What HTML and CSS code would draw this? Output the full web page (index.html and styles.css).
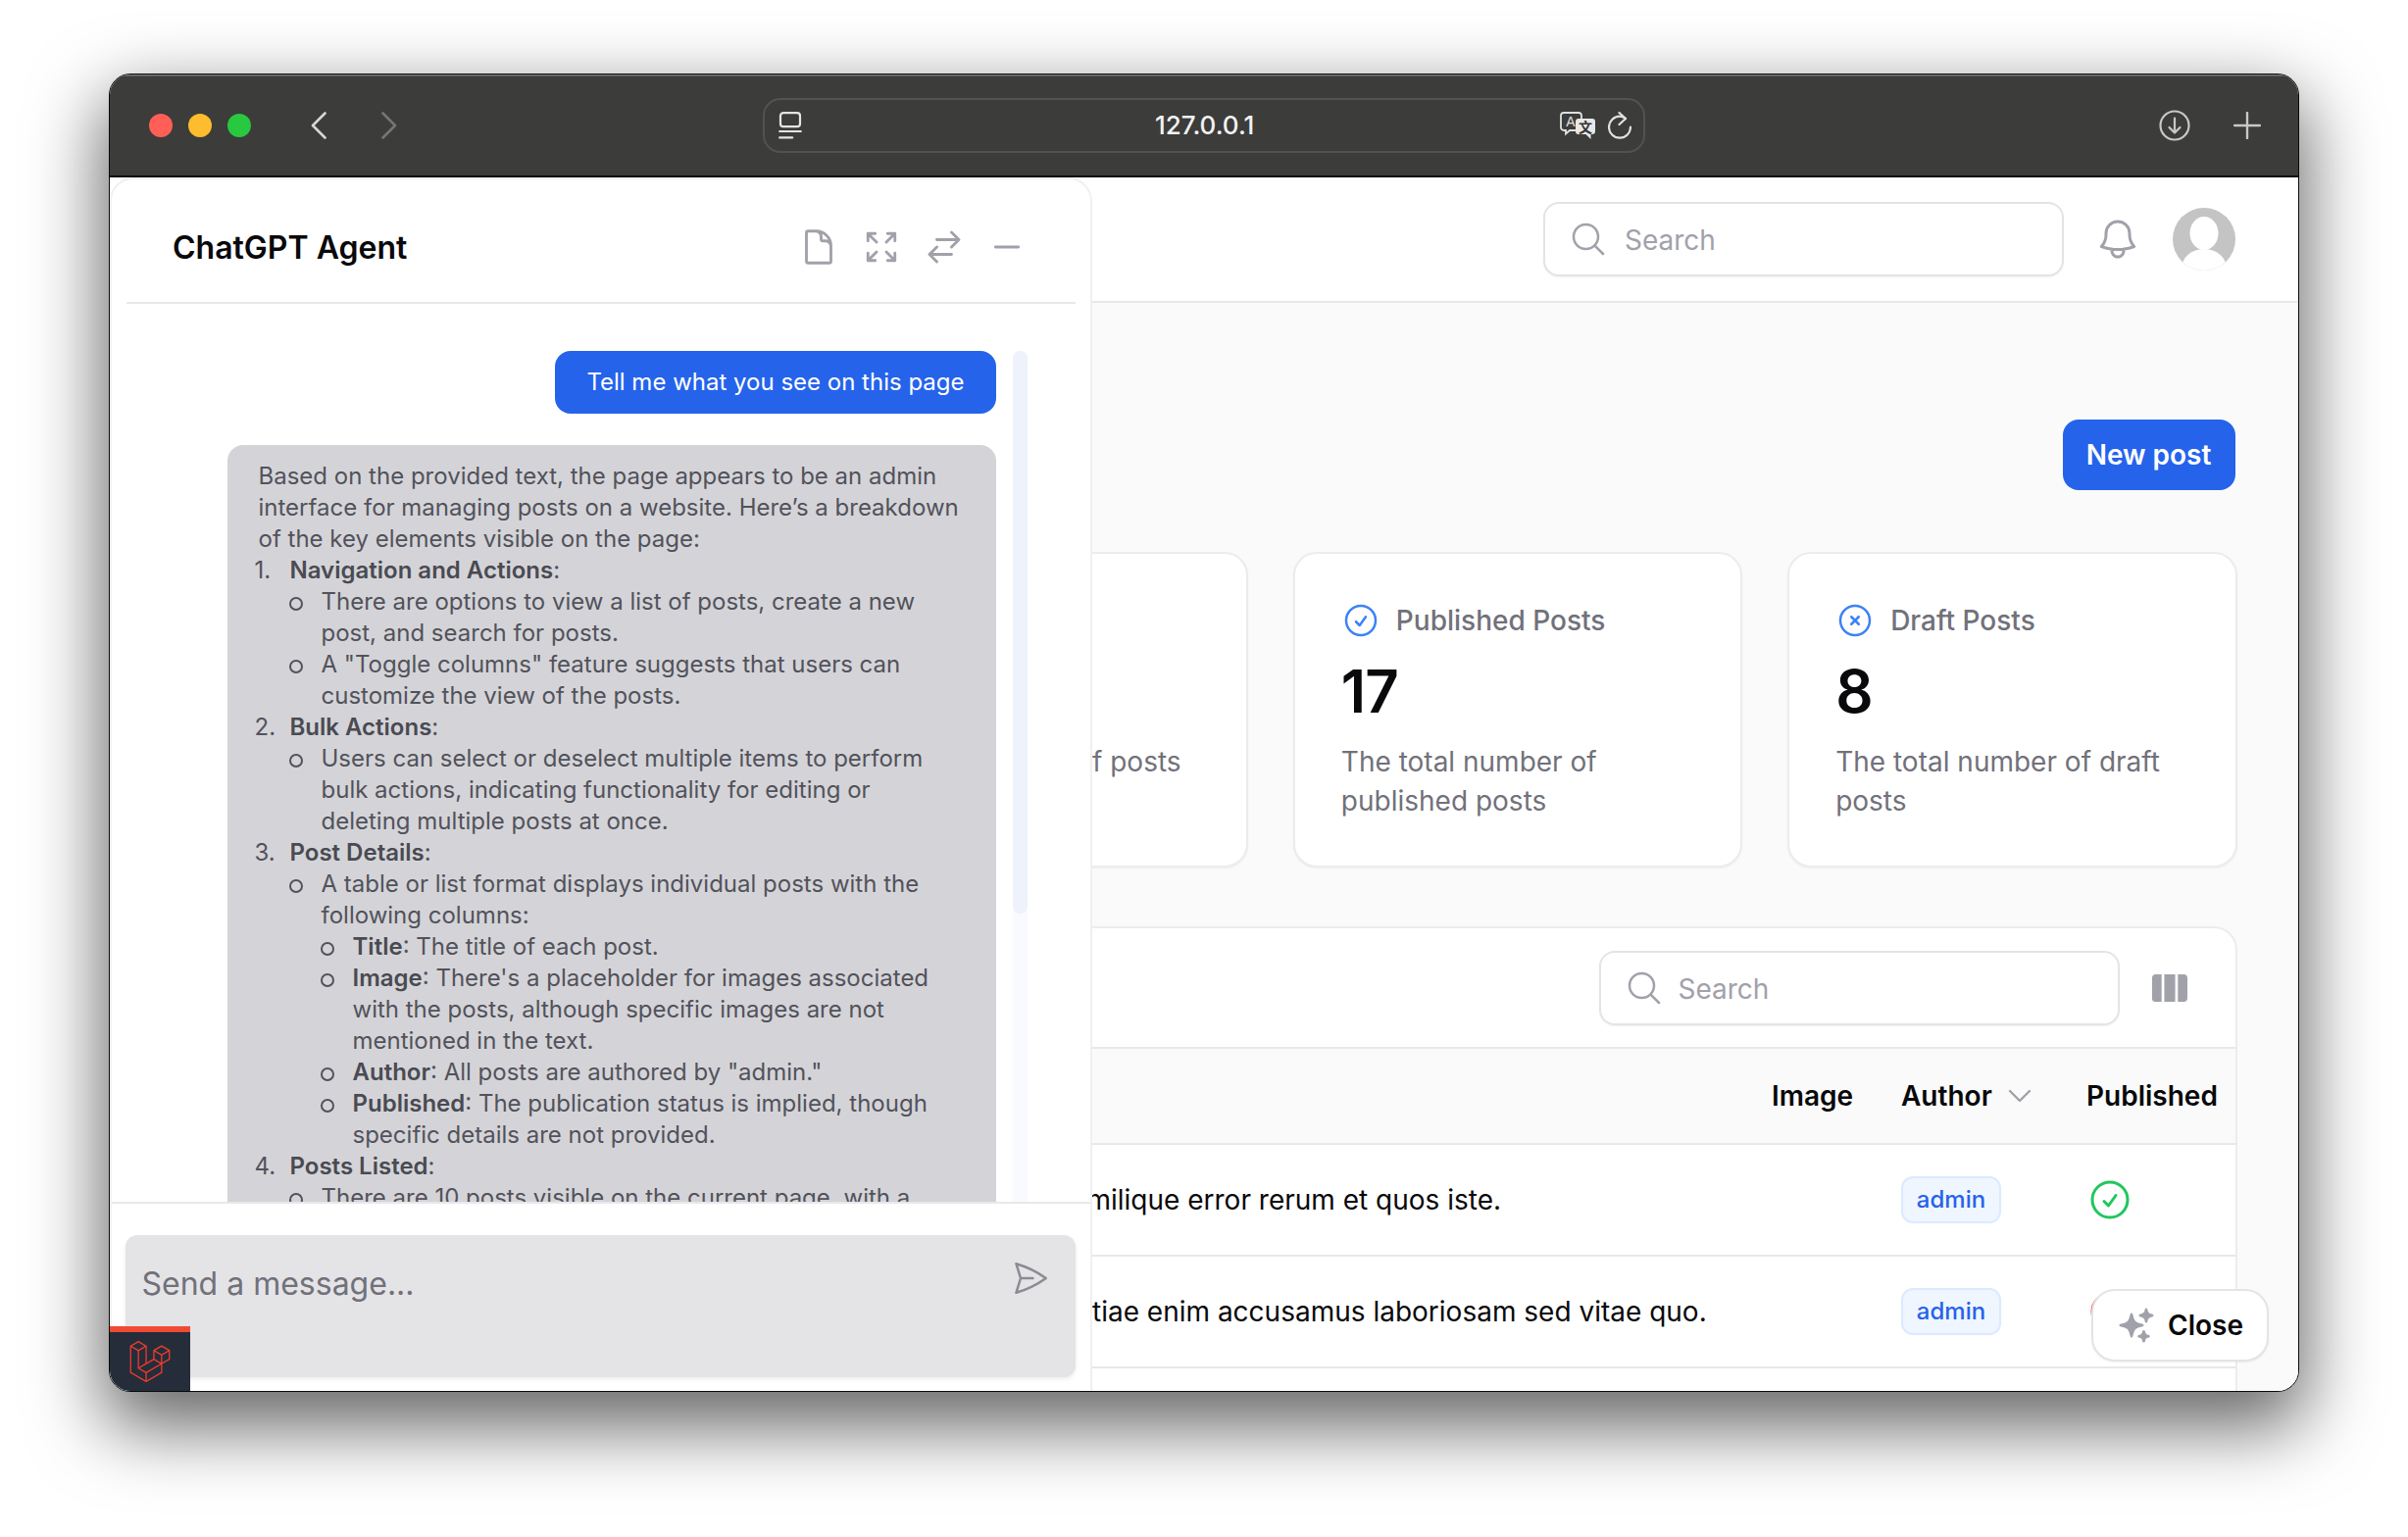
FILE: index.html

```html
<!DOCTYPE html>
<html lang="en">
<head>
    <meta charset="UTF-8">
    <meta name="viewport" content="width=device-width, initial-scale=1.0">
    <title>Posts</title>
    <link rel="stylesheet" href="styles.css">
</head>
<body>
    <div class="window">
        <!-- Browser toolbar -->
        <div class="titlebar">
            <div class="lights">
                <span class="light red"></span>
                <span class="light yellow"></span>
                <span class="light green"></span>
            </div>
            <svg class="nav-back" viewBox="0 0 16 28" fill="none" stroke="#d6d6d6" stroke-width="2.6" stroke-linecap="round" stroke-linejoin="round"><path d="M14.5 1.5 2 14l12.5 12.5"/></svg>
            <svg class="nav-forward" viewBox="0 0 16 28" fill="none" stroke="#757575" stroke-width="2.6" stroke-linecap="round" stroke-linejoin="round"><path d="M1.5 1.5 14 14 1.5 26.5"/></svg>
            <div class="address">
                <svg class="address-left" viewBox="0 0 24 28" fill="none" stroke="#e4e4e4" stroke-width="2.2" stroke-linecap="round"><rect x="2" y="1.2" width="20" height="14" rx="3"/><path d="M1.2 20h21.6"/><path d="M1.2 26.4h13"/></svg>
                <span class="url">127.0.0.1</span>
                <div class="address-right">
                    <svg class="translate" viewBox="0 0 36 28"><path d="M4 1h15a3 3 0 0 1 3 3v12a3 3 0 0 1-3 3h-9l-4 3.500V19H4a3 3 0 0 1-3-3V4a3 3 0 0 1 3-3z" fill="#3c3c3a" stroke="#e0e0e0" stroke-width="1.800"/><text x="11" y="14.500" class="translate-a">A</text><path d="M19 7h14a3 3 0 0 1 3 3v10a3 3 0 0 1-3 3h-1.500v5l-5-5H19a3 3 0 0 1-3-3V10a3 3 0 0 1 3-3z" fill="#e8e8e8"/><text x="26" y="20.500" class="translate-b">文</text></svg>
                    <svg class="reload" viewBox="0 0 24 28" fill="none" stroke="#e0e0e0" stroke-width="2.200" stroke-linecap="round" stroke-linejoin="round"><path d="M18 7c-2-1.500-4-2.300-6-2.300a11 11 0 1 0 11 11"/><path d="m11.500 1 6.500 6-6.500 6"/></svg>
                </div>
            </div>
            <svg class="download" viewBox="0 0 32 32" fill="none" stroke="#c8c8c8" stroke-width="2.200" stroke-linecap="round" stroke-linejoin="round"><circle cx="16" cy="16" r="14.500"/><path d="M16 8.500v15M10.500 18l5.500 5.500 5.500-5.500"/></svg>
            <svg class="plus" viewBox="0 0 28 28" fill="none" stroke="#c8c8c8" stroke-width="2.400" stroke-linecap="round"><path d="M14 1v26M1 14h26"/></svg>
        </div>

        <div class="app">
            <!-- Topbar -->
            <div class="topbar">
                <div class="search">
                    <svg class="search-icon" viewBox="0 0 24 24" fill="none" stroke="#a1a1aa" stroke-width="1.5" stroke-linecap="round" stroke-linejoin="round"><path d="M21 21l-5.197-5.197m0 0A7.5 7.5 0 105.196 5.196a7.5 7.5 0 0010.607 10.607z"/></svg>
                    <span>Search</span>
                </div>
                <svg class="bell" viewBox="0 0 24 24" fill="none" stroke="#a1a1aa" stroke-width="1.5" stroke-linecap="round" stroke-linejoin="round"><path d="M14.857 17.082a23.848 23.848 0 005.454-1.31A8.967 8.967 0 0118 9.750v-.7V9A6 6 0 006 9v.75a8.967 8.967 0 01-2.312 6.022c1.733.64 3.56 1.085 5.455 1.31m5.714 0a24.255 24.255 0 01-5.714 0m5.714 0a3 3 0 11-5.714 0"/></svg>
                <svg class="avatar" viewBox="0 0 64 64"><defs><clipPath id="avatarClip"><circle cx="32" cy="32" r="32"/></clipPath></defs><circle cx="32" cy="32" r="32" fill="#c4c4c4"/><g clip-path="url(#avatarClip)" fill="#fff"><ellipse cx="32" cy="26" rx="14.500" ry="17"/><ellipse cx="32" cy="62" rx="23" ry="20"/></g></svg>
            </div>

            <div class="content">
                <div class="page-actions">
                    <button class="primary-btn">New post</button>
                </div>

                <div class="stats">
                    <div class="stat-card">
                        <div class="stat-label">
                            <svg class="stat-icon" viewBox="0 0 24 24" fill="none" stroke="#3b82f6" stroke-width="1.5" stroke-linecap="round" stroke-linejoin="round"><path d="M21 12a9 9 0 11-18 0 9 9 0 0118 0z"/></svg>
                            <span>All Posts</span>
                        </div>
                        <div class="stat-number">25</div>
                        <p class="stat-desc">The total number of posts</p>
                    </div>
                    <div class="stat-card">
                        <div class="stat-label">
                            <svg class="stat-icon" viewBox="0 0 24 24" fill="none" stroke="#3b82f6" stroke-width="1.5" stroke-linecap="round" stroke-linejoin="round"><path d="M9 12.750L11.250 15 15 9.750M21 12a9 9 0 11-18 0 9 9 0 0118 0z"/></svg>
                            <span>Published Posts</span>
                        </div>
                        <div class="stat-number">17</div>
                        <p class="stat-desc">The total number of published posts</p>
                    </div>
                    <div class="stat-card">
                        <div class="stat-label">
                            <svg class="stat-icon" viewBox="0 0 24 24" fill="none" stroke="#3b82f6" stroke-width="1.5" stroke-linecap="round" stroke-linejoin="round"><path d="M9.750 9.750l4.500 4.500m0-4.500l-4.500 4.500M21 12a9 9 0 11-18 0 9 9 0 0118 0z"/></svg>
                            <span>Draft Posts</span>
                        </div>
                        <div class="stat-number">8</div>
                        <p class="stat-desc">The total number of draft posts</p>
                    </div>
                </div>

                <!-- Posts table -->
                <div class="table-card">
                    <div class="table-toolbar">
                        <div class="search">
                            <svg class="search-icon" viewBox="0 0 24 24" fill="none" stroke="#a1a1aa" stroke-width="1.5" stroke-linecap="round" stroke-linejoin="round"><path d="M21 21l-5.197-5.197m0 0A7.5 7.5 0 105.196 5.196a7.5 7.5 0 0010.607 10.607z"/></svg>
                            <span>Search</span>
                        </div>
                        <svg class="columns-icon" viewBox="2.250 3.750 19.500 16.500" preserveAspectRatio="none" fill="#a1a1aa"><path d="M15 3.750H9v16.500h6V3.750zM16.500 20.250h3.375c1.035 0 1.875-.84 1.875-1.875V5.625c0-1.036-.84-1.875-1.875-1.875H16.500v16.500zM4.125 3.750H7.500v16.500H4.125a1.875 1.875 0 01-1.875-1.875V5.625c0-1.036.84-1.875 1.875-1.875z"/></svg>
                    </div>
                    <div class="table-row table-head">
                        <span class="cell-title">Title</span>
                        <span>Image</span>
                        <span class="author-head">Author
                            <svg class="chevron" viewBox="0 0 24 24" fill="none" stroke="#a1a1aa" stroke-width="1.8" stroke-linecap="round" stroke-linejoin="round"><path d="M19.500 8.250l-7.500 7.500-7.500-7.500"/></svg>
                        </span>
                        <span>Published</span>
                    </div>
                    <div class="table-row">
                        <span class="cell-title">Aut similique error rerum et quos iste.</span>
                        <span></span>
                        <span><span class="badge">admin</span></span>
                        <svg class="status-icon" viewBox="0 0 24 24" fill="none" stroke="#22c55e" stroke-width="1.5" stroke-linecap="round" stroke-linejoin="round"><path d="M9 12.750L11.250 15 15 9.750M21 12a9 9 0 11-18 0 9 9 0 0118 0z"/></svg>
                    </div>
                    <div class="table-row">
                        <span class="cell-title">Molestiae enim accusamus laboriosam sed vitae quo.</span>
                        <span></span>
                        <span><span class="badge">admin</span></span>
                        <svg class="status-icon" viewBox="0 0 24 24" fill="none" stroke="#ef4444" stroke-width="1.5" stroke-linecap="round" stroke-linejoin="round"><path d="M9.750 9.750l4.500 4.500m0-4.500l-4.500 4.500M21 12a9 9 0 11-18 0 9 9 0 0118 0z"/></svg>
                    </div>
                </div>
            </div>

            <!-- Chat panel -->
            <div class="chat-panel">
                <div class="chat-header">
                    <h2>ChatGPT Agent</h2>
                    <div class="chat-tools">
                        <svg viewBox="0 0 24 24"><path d="M19.500 14.250v-2.625a3.375 3.375 0 00-3.375-3.375h-1.500A1.125 1.125 0 0113.500 7.125v-1.500a3.375 3.375 0 00-3.375-3.375H8.250m2.250 0H5.625c-.621 0-1.125.504-1.125 1.125v17.250c0 .621.504 1.125 1.125 1.125h12.750c.621 0 1.125-.504 1.125-1.125V11.250a9 9 0 00-9-9z"/></svg>
                        <svg viewBox="0 0 24 24"><path d="M3.750 3.750v4.500m0-4.500h4.500m-4.500 0L9 9M3.750 20.250v-4.500m0 4.500h4.500m-4.500 0L9 15M20.250 3.750h-4.500m4.500 0v4.500m0-4.500L15 9m5.250 11.250h-4.500m4.500 0v-4.500m0 4.500L15 15"/></svg>
                        <svg viewBox="0 0 24 24"><path d="M7.500 21L3 16.500m0 0L7.500 12M3 16.500h13.500m0-13.500L21 7.500m0 0L16.500 12M21 7.500H7.500"/></svg>
                        <svg viewBox="0 0 24 24"><path d="M5 12h14"/></svg>
                    </div>
                </div>

                <div class="chat-body">
                    <div class="messages">
                        <div class="msg-user">Tell me what you see on this page</div>
                        <div class="msg-agent">
                            <p>Based on the provided text, the page appears to be an admin interface for managing posts on a website. Here’s a breakdown of the key elements visible on the page:</p>
                            <ol>
                                <li><strong>Navigation and Actions</strong>:
                                    <ul>
                                        <li>There are options to view a list of posts, create a new post, and search for posts.</li>
                                        <li>A "Toggle columns" feature suggests that users can customize the view of the posts.</li>
                                    </ul>
                                </li>
                                <li><strong>Bulk Actions</strong>:
                                    <ul>
                                        <li>Users can select or deselect multiple items to perform bulk actions, indicating functionality for editing or deleting multiple posts at once.</li>
                                    </ul>
                                </li>
                                <li><strong>Post Details</strong>:
                                    <ul>
                                        <li>A table or list format displays individual posts with the following columns:
                                            <ul>
                                                <li><strong>Title</strong>: The title of each post.</li>
                                                <li><strong>Image</strong>: There's a placeholder for images associated with the posts, although specific images are not mentioned in the text.</li>
                                                <li><strong>Author</strong>: All posts are authored by "admin."</li>
                                                <li><strong>Published</strong>: The publication status is implied, though specific details are not provided.</li>
                                            </ul>
                                        </li>
                                    </ul>
                                </li>
                                <li><strong>Posts Listed</strong>:
                                    <ul>
                                        <li>There are 10 posts visible on the current page, with a</li>
                                    </ul>
                                </li>
                            </ol>
                        </div>
                    </div>
                    <div class="scroll-track"><div class="scroll-thumb"></div></div>
                </div>

                <div class="chat-footer">
                    <div class="chat-input">
                        <span>Send a message...</span>
                        <svg class="send-icon" viewBox="0 0 24 24" fill="none" stroke="#8b8b93" stroke-width="1.5" stroke-linecap="round" stroke-linejoin="round"><path d="M6 12L3.269 3.126A59.768 59.768 0 0121.485 12 59.770 59.770 0 013.270 20.876L5.999 12zm0 0h7.500"/></svg>
                    </div>
                </div>
            </div>

            <!-- Debug badge -->
            <div class="laravel-badge">
                <svg viewBox="0 0 24 24" fill="#ef3b2d"><path d="M23.642 5.430a.364.364 0 01.014.1v5.149c0 .135-.073.26-.189.326l-4.323 2.490v4.934a.378.378 0 01-.188.326L9.930 23.949a.316.316 0 01-.066.027c-.008.002-.016.008-.024.01a.348.348 0 01-.192 0c-.011-.002-.02-.008-.03-.012-.02-.008-.042-.014-.062-.025L.533 18.755a.376.376 0 01-.189-.326V2.974c0-.033.005-.066.014-.098.003-.012.01-.02.014-.032a.369.369 0 01.023-.058c.004-.013.015-.022.023-.033l.033-.045c.012-.01.025-.018.037-.027.014-.012.027-.024.041-.034H.53L5.043.05a.375.375 0 01.375 0L9.930 2.647h.002c.015.01.027.021.04.033l.038.027c.013.014.02.03.033.045.008.011.02.021.025.033.01.02.017.038.024.058.003.011.01.021.013.032.01.031.014.064.014.098v9.652l3.760-2.164V5.527c0-.033.004-.066.013-.098.003-.01.01-.02.013-.032a.487.487 0 01.024-.059c.007-.012.018-.02.025-.033.012-.015.021-.03.033-.043.012-.012.025-.02.037-.028.014-.01.026-.023.041-.032h.001l4.513-2.598a.375.375 0 01.375 0l4.513 2.598c.016.01.027.021.042.031.012.01.025.018.036.028.013.014.022.03.034.044.008.012.019.021.024.033.011.02.018.04.024.06.006.01.012.021.015.032zm-.74 5.032V6.179l-1.578.908-2.182 1.256v4.283zm-4.510 7.750v-4.287l-2.147 1.225-6.126 3.498v4.325zM1.093 3.624v14.588l8.273 4.761v-4.325l-4.322-2.445-.002-.003H5.040c-.014-.01-.025-.021-.04-.031-.011-.01-.024-.018-.035-.027l-.001-.002c-.013-.012-.021-.025-.031-.04-.01-.011-.021-.022-.028-.036h-.002c-.008-.014-.013-.031-.02-.047-.006-.016-.014-.027-.018-.043a.490.490 0 01-.008-.057c-.002-.014-.006-.027-.006-.041V5.789l-2.180-1.257zM5.230.810L1.470 2.974l3.760 2.164 3.758-2.164zm1.956 13.505l2.182-1.256V3.624l-1.580.910-2.182 1.255v9.435zm11.581-10.950l-3.760 2.163 3.760 2.163 3.759-2.164zm-.376 4.978L16.210 7.087 14.630 6.180v4.283l2.182 1.256 1.580.908zm-8.650 9.654l5.514-3.148 2.756-1.572-3.757-2.163-4.323 2.489-3.941 2.270z"/></svg>
            </div>

            <button class="close-btn">
                <svg viewBox="0 0 24 24" fill="#a1a1aa"><path d="M9 4.500a.75.75 0 01.721.544l.813 2.846a3.750 3.750 0 002.576 2.576l2.846.813a.75.75 0 010 1.442l-2.846.813a3.750 3.750 0 00-2.576 2.576l-.813 2.846a.75.75 0 01-1.442 0l-.813-2.846a3.750 3.750 0 00-2.576-2.576l-2.846-.813a.75.75 0 010-1.442l2.846-.813A3.750 3.750 0 007.466 7.890l.813-2.846A.75.75 0 019 4.500zM18 1.500a.75.75 0 01.728.568l.258 1.036c.236.94.97 1.674 1.910 1.910l1.036.258a.75.75 0 010 1.456l-1.036.258c-.94.236-1.674.97-1.910 1.910l-.258 1.036a.75.75 0 01-1.456 0l-.258-1.036a2.625 2.625 0 00-1.910-1.910l-1.036-.258a.75.75 0 010-1.456l1.036-.258a2.625 2.625 0 001.910-1.910l.258-1.036A.75.75 0 0118 1.500zM16.500 15a.75.75 0 01.712.513l.394 1.183c.15.447.5.799.948.948l1.183.395a.75.75 0 010 1.422l-1.183.395c-.447.15-.799.5-.948.948l-.395 1.183a.75.75 0 01-1.422 0l-.395-1.183a1.500 1.500 0 00-.948-.948l-1.183-.395a.75.75 0 010-1.422l1.183-.395c.447-.15.799-.5.948-.948l.395-1.183A.75.75 0 0116.500 15z"/></svg>
                Close
            </button>
        </div>
    </div>
</body>
</html>
```

FILE: styles.css

```css
/* General */
* {
    box-sizing: border-box;
}

body {
    margin: 0;
    height: 1568px;
    padding: 75px 111px 148px;
    background: #fff;
    font-family: Inter, "Noto Sans", sans-serif;
    color: #09090b;
    overflow: hidden;
}

p, h2, ol, ul {
    margin: 0;
    padding: 0;
}

button {
    font-family: inherit;
    border: none;
    cursor: pointer;
}

/* Window */
.window {
    height: 100%;
    display: flex;
    flex-direction: column;
    border: 1.5px solid #0a0a0a;
    border-radius: 22px;
    overflow: hidden;
    box-shadow: 0 30px 75px 6px rgba(0, 0, 0, 0.6);
    background: #fff;
}

.titlebar {
    flex: none;
    height: 105px;
    display: flex;
    align-items: center;
    padding: 0 38px 0 40px;
    background: #3c3c3a;
    border-bottom: 2px solid #0c0c0c;
    box-shadow: inset 0 1.5px 0 #77777a;
}

.lights {
    display: flex;
    gap: 16px;
}

.light {
    width: 24px;
    height: 24px;
    border-radius: 50%;
}

.red { background: #ff5f57; }
.yellow { background: #febc2e; }
.green { background: #28c840; }

.nav-back {
    width: 16px;
    height: 28px;
    margin-left: 61px;
}

.nav-forward {
    width: 16px;
    height: 28px;
    margin-left: 56px;
}

.address {
    width: 900px;
    height: 56px;
    margin-left: 373px;
    padding: 0 12px 0 14px;
    display: grid;
    grid-template-columns: 384px auto 1fr;
    align-items: center;
    border: 2px solid #525250;
    border-radius: 18px;
}

.address-left {
    width: 24px;
    height: 28px;
}

.url {
    color: #f2f2f2;
    font-size: 26px;
    font-weight: 500;
}

.address-right {
    display: flex;
    justify-content: flex-end;
    gap: 13px;
}

.translate {
    width: 36px;
    height: 28px;
}

.translate-a {
    fill: #e0e0e0;
    font-family: "Liberation Sans", sans-serif;
    font-size: 14px;
    text-anchor: middle;
}

.translate-b {
    fill: #333;
    font-family: "Noto Sans CJK SC", sans-serif;
    font-size: 14px;
    font-weight: 700;
    text-anchor: middle;
}

.reload {
    width: 24px;
    height: 28px;
}

.download {
    width: 32px;
    height: 32px;
    margin-left: auto;
}

.plus {
    width: 28px;
    height: 28px;
    margin-left: 44px;
}

/* App */
.app {
    position: relative;
    flex: 1;
    min-height: 0;
    overflow: hidden;
    background: #fafafa;
}

.topbar {
    height: 128px;
    display: flex;
    justify-content: flex-end;
    align-items: center;
    gap: 32px;
    padding: 0 64px;
    background: #fff;
    border-bottom: 2px solid #e8e8ea;
}

.topbar .search {
    margin-right: -1px;
}

.search {
    width: 531px;
    height: 76px;
    display: flex;
    align-items: center;
    gap: 17px;
    padding: 0 24px;
    background: #fff;
    border: 2px solid #e4e4e7;
    border-radius: 16px;
    box-shadow: 0 1px 2px rgba(0, 0, 0, 0.06);
    color: #a1a1aa;
    font-size: 28px;
}

.search span {
    padding-top: 2px;
}

.search-icon {
    width: 40px;
    height: 40px;
    flex: none;
}

.bell {
    width: 48px;
    height: 48px;
}

.avatar {
    width: 64px;
    height: 64px;
}

.content {
    padding: 119px 62.5px 0 702.5px;
}

.page-actions {
    display: flex;
    justify-content: flex-end;
    margin-bottom: 63px;
}

.primary-btn {
    width: 176px;
    height: 72px;
    margin-right: 2px;
    border-radius: 16px;
    background: #2563eb;
    color: #fff;
    font-size: 28px;
    font-weight: 600;
}

/* Stat cards */
.stats {
    display: grid;
    grid-template-columns: repeat(3, 1fr);
    gap: 46px;
    margin-bottom: 60px;
}

.stat-card {
    height: 322px;
    padding: 48px 47px;
    background: #fff;
    border: 2px solid #ececee;
    border-radius: 24px;
    box-shadow: 0 1px 2px rgba(0, 0, 0, 0.05);
}

.stat-label {
    display: flex;
    align-items: center;
    gap: 16px;
    height: 40px;
    color: #71717a;
    font-size: 28px;
    font-weight: 500;
}

.stat-icon {
    width: 40px;
    height: 40px;
}

.stat-number {
    margin-top: 16px;
    font-size: 60px;
    font-weight: 600;
    line-height: 72px;
    letter-spacing: -1px;
    color: #09090b;
}

.stat-desc {
    margin-top: 16px;
    color: #71717a;
    font-size: 28px;
    line-height: 40px;
}

/* Table */
.table-card {
    background: #fff;
    border: 2px solid #ececee;
    border-radius: 24px;
    height: 700px;
}

.table-toolbar {
    height: 119px;
    display: flex;
    justify-content: flex-end;
    align-items: center;
    gap: 33px;
    padding: 1.5px 49px 0 0;
    border-bottom: 2px solid #e8e8ea;
    box-sizing: content-box;
}

.table-toolbar .search {
    gap: 15px;
}

.columns-icon {
    width: 36px;
    height: 28px;
}

.table-row {
    height: 114px;
    display: grid;
    grid-template-columns: 990.5px 132px 189px 1fr;
    align-items: center;
    border-bottom: 2px solid #e8e8ea;
    font-size: 28px;
}

.table-head {
    height: 98px;
    background: #fafafa;
    font-weight: 600;
}

.cell-title {
    padding-left: 217.5px;
    white-space: nowrap;
}

.author-head {
    display: flex;
    align-items: center;
    gap: 12px;
}

.chevron {
    width: 32px;
    height: 32px;
}

.badge {
    display: inline-block;
    width: 102px;
    height: 48px;
    border: 2px solid #dbeafe;
    border-radius: 12px;
    background: #eff6ff;
    color: #2563eb;
    font-size: 24px;
    font-weight: 500;
    line-height: 44px;
    text-align: center;
}

.status-icon {
    width: 48px;
    height: 48px;
}

/* Chat panel */
.chat-panel {
    position: absolute;
    top: 0;
    left: 0;
    bottom: 0;
    width: 1002px;
    display: flex;
    flex-direction: column;
    background: #fff;
    border: 2px solid #f0f0f1;
    border-bottom: none;
    border-radius: 24px 24px 0 0;
}

.chat-header {
    flex: none;
    height: 127px;
    margin: 0 15px;
    padding: 13px 50px 0 47px;
    display: flex;
    justify-content: space-between;
    align-items: center;
    border-bottom: 2px solid #e8e8ea;
}

.chat-header h2 {
    font-size: 32px;
    font-weight: 600;
    color: #09090b;
}

.chat-tools {
    display: flex;
    gap: 24px;
}

.chat-tools svg {
    width: 40px;
    height: 40px;
    fill: none;
    stroke: #a1a1aa;
    stroke-width: 1.7;
    stroke-linecap: round;
    stroke-linejoin: round;
}

.chat-body {
    flex: 1;
    min-height: 0;
    display: flex;
    gap: 17px;
    padding: 48px 64.5px 0 117.5px;
    overflow: hidden;
    border-bottom: 2px solid #e8e8ea;
}

.messages {
    flex: 1;
    display: flex;
    flex-direction: column;
    align-items: flex-end;
    gap: 32px;
    min-width: 0;
}

.msg-user {
    padding: 16px 32px;
    background: #2563eb;
    color: #fff;
    border-radius: 16px;
    font-size: 24px;
    line-height: 32px;
    white-space: nowrap;
}

.msg-agent {
    width: 100%;
    padding: 16px 32px;
    background: #d4d4d8;
    color: #52525b;
    border-radius: 16px 16px 0 0;
    font-size: 24px;
    line-height: 32px;
}

.msg-agent strong {
    font-weight: 600;
    color: #4a4a52;
}

/* List markers sit further out than the browser puts them */
.msg-agent ol {
    padding-left: 32px;
    list-style: none;
    counter-reset: step;
}

.msg-agent ol > li {
    position: relative;
    counter-increment: step;
}

.msg-agent ol > li::before {
    content: counter(step) ".";
    position: absolute;
    left: -36px;
    top: 0;
}

.msg-agent ul {
    padding-left: 32px;
    list-style: none;
}

.msg-agent ul > li {
    position: relative;
}

.msg-agent ul > li::before {
    content: "";
    position: absolute;
    left: -33px;
    top: 11px;
    width: 10px;
    height: 10px;
    border: 2px solid #52525b;
    border-radius: 50%;
}

.scroll-track {
    flex: none;
    width: 15px;
    background: #f9fafe;
    border-radius: 8px 8px 0 0;
}

.scroll-thumb {
    height: 574px;
    background: #eef2fb;
    border-radius: 8px;
}

.chat-footer {
    flex: none;
    height: 191px;
    padding: 32px 15.5px 0 13.5px;
}

.chat-input {
    height: 145px;
    display: flex;
    justify-content: space-between;
    align-items: flex-start;
    padding: 24px 26px 0 17px;
    background: #e4e4e7;
    border-radius: 12px;
    box-shadow: 0 2px 4px rgba(0, 0, 0, 0.08);
    color: #71717a;
    font-size: 32px;
    line-height: 52px;
}

.send-icon {
    width: 40px;
    height: 40px;
}

/* Overlay buttons */
.laravel-badge {
    position: absolute;
    left: 0;
    bottom: 0;
    width: 82px;
    height: 66px;
    display: flex;
    justify-content: center;
    padding-top: 9px;
    background: #252d3a;
    border-top: 6px solid #ef4b34;
}

.laravel-badge svg {
    width: 42px;
    height: 42px;
}

.close-btn {
    position: absolute;
    right: 30px;
    bottom: 30px;
    width: 181px;
    height: 74px;
    display: flex;
    align-items: center;
    gap: 12px;
    padding: 0 0 0 24px;
    background: #fff;
    border: 2px solid #e4e4e7;
    border-radius: 24px;
    box-shadow: 0 1px 2px rgba(0, 0, 0, 0.06);
    color: #09090b;
    font-size: 28px;
    font-weight: 600;
}

.close-btn svg {
    width: 40px;
    height: 40px;
}
```
